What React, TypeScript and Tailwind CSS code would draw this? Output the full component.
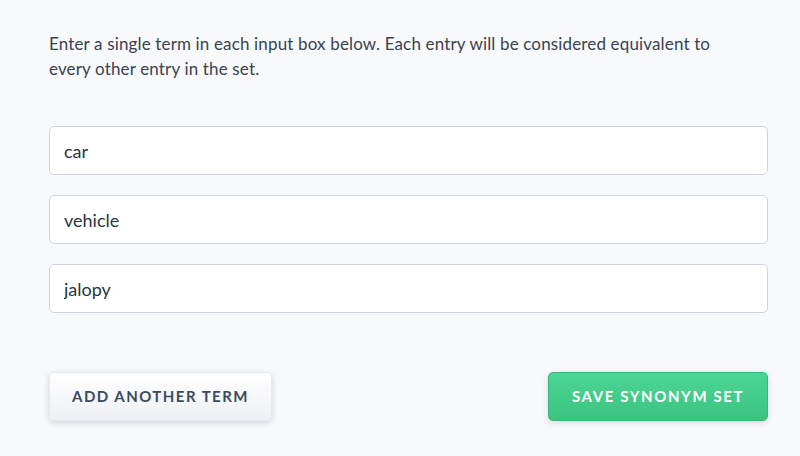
import React from 'react';

const terms = ['car', 'vehicle', 'jalopy'];

export default function App() {
  return (
    <div
      className="min-h-[456px] w-full bg-[#f8f9fb] pt-[31px] text-[#3a4250]"
      style={{ fontFamily: 'Lato, "Open Sans", sans-serif' }}
    >
      <div className="ml-[49px] w-[719px]">
        <p className="text-[17px] leading-[25px] tracking-[0.15px] pr-[50px]">
          Enter a single term in each input box below. Each entry will be considered equivalent to every other entry in the set.
        </p>

        <div className="mt-[45px] flex flex-col gap-[20px]">
          {terms.map((t) => (
            <input
              key={t}
              defaultValue={t}
              className="h-[49px] w-full rounded-[5px] border border-[#cdd4de] bg-white px-[14px] text-[18px] text-[#2b3440] outline-none"
            />
          ))}
        </div>

        <div className="mt-[59px] flex items-center justify-between">
          <button className="h-[49px] w-[223px] rounded-[5px] border border-[#e6e9ee] bg-gradient-to-b from-white to-[#eef0f4] text-[15px] font-bold uppercase tracking-[1.45px] text-[#3b4a5e] shadow-[0_2px_6px_rgba(40,50,70,0.18)]">
            Add another term
          </button>
          <button className="h-[49px] w-[220px] rounded-[5px] border border-[#34b877] bg-gradient-to-b from-[#4bd595] to-[#3cc47f] text-[15px] font-bold uppercase tracking-[1.6px] text-white shadow-[0_2px_6px_rgba(40,50,70,0.15)]">
            Save synonym set
          </button>
        </div>
      </div>
    </div>
  );
}
